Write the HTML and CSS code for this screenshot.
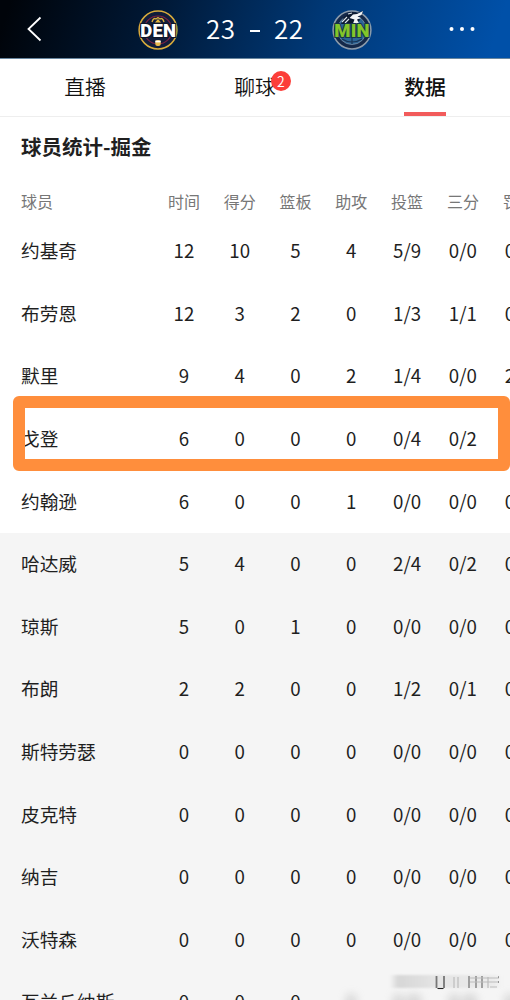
FILE: index.html
```
<!DOCTYPE html>
<html lang="zh-CN">
<head>
  <meta charset="UTF-8">
  <meta name="viewport" content="width=device-width, initial-scale=1.0">
  <title>球员统计</title>
  <link rel="stylesheet" href="styles.css">
</head>
<body>
  <header class="header">
    <svg class="back" viewBox="0 0 16 26"><path d="M14.5 1.5 2.5 13l12 11.5" /></svg>

    <div class="score">
      <svg class="logo" viewBox="0 0 40 40">
        <circle cx="20" cy="20" r="18.9" fill="#101d3b" stroke="#d9ac3c" stroke-width="1.5" />
        <circle cx="20" cy="20" r="14" fill="none" stroke="#7d2340" stroke-width="1.2" />
        <path d="M14 12c1-3.5 2.500-4 4-3l2-1.500 2 1.500c1.500-1 3-.5 4 3" fill="none" stroke="#d9ac3c" stroke-width="1.4" />
        <path d="m17 12.500 3-3.500 3 3.500z" fill="#e5b63c" />
        <rect x="17.3" y="30" width="5.4" height="6" rx="2" fill="#e8b94b" />
        <path d="M17.3 31.5h5.4" stroke="#fff" stroke-width="1.8" />
        <text class="logo-text den" x="20.3" y="27">DEN</text>
      </svg>
      <span class="points">23</span>
      <span class="dash">-</span>
      <span class="points">22</span>
      <svg class="logo" viewBox="0 0 40 40">
        <circle cx="20" cy="20" r="18.9" fill="#14294a" stroke="#8c9bab" stroke-width="1.5" />
        <circle cx="20" cy="20" r="14.5" fill="#2b6596" stroke="#8497ac" stroke-width=".7" />
        <path d="M20 26v8M10 29c6 4 14 4 20 0" fill="none" stroke="#183354" stroke-width="1.2" />
        <path d="m9 14 3-7 7-5 6 1 6-2-1 4-4 2 2 3-4 4z" fill="#0b1930" />
        <path d="m21 4.5 4-.5 6-3-1.5 4-4 1.5 3.5 1.500-4 1.500 2 4h-6l1.500-4-5-1.500z" fill="#f3f6f8" />
        <path d="m10 12 5-5m-2 6 4-4m-1-5 4-1" fill="none" stroke="#dce4eb" stroke-width="1.1" />
        <text class="logo-text min" x="20" y="27">MIN</text>
      </svg>
    </div>

    <svg class="more" viewBox="0 0 26 6">
      <circle cx="2.5" cy="3" r="2" /><circle cx="13" cy="3" r="2" /><circle cx="23.5" cy="3" r="2" />
    </svg>
  </header>

  <nav class="tabs">
    <a class="tab">直播</a>
    <a class="tab"><span class="tab-label">聊球<i class="badge">2</i></span></a>
    <a class="tab active">数据</a>
  </nav>

  <main>
    <h1>球员统计-掘金</h1>

    <table class="stats">
      <thead>
        <tr><th class="name">球员</th><th>时间</th><th>得分</th><th>篮板</th><th>助攻</th><th>投篮</th><th>三分</th><th>罚球</th></tr>
      </thead>
      <tbody class="starters">
        <tr><td>约基奇</td><td>12</td><td>10</td><td>5</td><td>4</td><td>5/9</td><td>0/0</td><td>0/0</td></tr>
        <tr><td>布劳恩</td><td>12</td><td>3</td><td>2</td><td>0</td><td>1/3</td><td>1/1</td><td>0/0</td></tr>
        <tr><td>默里</td><td>9</td><td>4</td><td>0</td><td>2</td><td>1/4</td><td>0/0</td><td>2/2</td></tr>
        <tr class="marked"><td>戈登<div class="marker"></div></td><td>6</td><td>0</td><td>0</td><td>0</td><td>0/4</td><td>0/2</td><td>0/0</td></tr>
        <tr><td>约翰逊</td><td>6</td><td>0</td><td>0</td><td>1</td><td>0/0</td><td>0/0</td><td>0/0</td></tr>
      </tbody>
      <tbody class="bench">
        <tr><td>哈达威</td><td>5</td><td>4</td><td>0</td><td>0</td><td>2/4</td><td>0/2</td><td>0/0</td></tr>
        <tr><td>琼斯</td><td>5</td><td>0</td><td>1</td><td>0</td><td>0/0</td><td>0/0</td><td>0/0</td></tr>
        <tr><td>布朗</td><td>2</td><td>2</td><td>0</td><td>0</td><td>1/2</td><td>0/1</td><td>0/0</td></tr>
        <tr><td>斯特劳瑟</td><td>0</td><td>0</td><td>0</td><td>0</td><td>0/0</td><td>0/0</td><td>0/0</td></tr>
        <tr><td>皮克特</td><td>0</td><td>0</td><td>0</td><td>0</td><td>0/0</td><td>0/0</td><td>0/0</td></tr>
        <tr><td>纳吉</td><td>0</td><td>0</td><td>0</td><td>0</td><td>0/0</td><td>0/0</td><td>0/0</td></tr>
        <tr><td>沃特森</td><td>0</td><td>0</td><td>0</td><td>0</td><td>0/0</td><td>0/0</td><td>0/0</td></tr>
        <tr class="faded"><td>瓦兰丘纳斯</td><td>0</td><td>0</td><td>0</td><td>0</td><td>0/0</td><td>0/0</td><td>0/0</td></tr>
      </tbody>
    </table>
  </main>

  <svg class="smudge" viewBox="0 0 118 26">
    <defs>
      <linearGradient id="fade"><stop offset="0" stop-color="#d5d5d5" /><stop offset=".4" stop-color="#e4e4e4" /><stop offset="1" stop-color="#ececec" /></linearGradient>
      <filter id="soft" x="-10%" y="-30%" width="120%" height="160%"><feGaussianBlur stdDeviation="3 1" /></filter>
      <filter id="thin" x="-10%" y="-30%" width="120%" height="160%"><feGaussianBlur stdDeviation=".7 .4" /></filter>
    </defs>
    <rect x="6" y="2" width="104" height="13" fill="url(#fade)" filter="url(#soft)" />
    <g filter="url(#thin)" fill="none" stroke="#bbb">
      <path d="M48.5 3v12M56 3v12" stroke="#777" stroke-width="1.8" />
      <path d="M66 4v11M70 4v11M100 4v11" stroke-width="1.2" />
      <path d="M81 3v12M88 3v12M94 3v12" stroke="#888" stroke-width="1.5" />
      <path d="M82 5h29M82 9h29M102 14h7" />
    </g>
    <path d="M49.5 15.5h6" stroke="#222" stroke-width="1.1" />
    <path d="M110 4h1M110 9h1" stroke="#555" />
  </svg>
</body>
</html>
```

FILE: styles.css
```
* {
  box-sizing: border-box;
}

body {
  position: relative;
  height: 1000px;
  margin: 0;
  overflow: hidden;
  background-color: #fff;
  color: #1f1f1f;
  font-family: 'Noto Sans CJK SC', sans-serif;
}

.header {
  display: flex;
  align-items: center;
  height: 59px;
  padding: 0 35px 0 26px;
  border-bottom: 1px solid #68869f;
  background: linear-gradient(108deg, #00040a 2%, #001835 30%, #003876 62%, #0050a8 96%);
}

.back {
  width: 16px;
  height: 26px;
  fill: none;
  stroke: #fff;
  stroke-width: 1.8;
}

.score {
  display: flex;
  align-items: center;
  margin: 1px 0 0 96px;
  color: #fff;
  font-size: 26px;
  font-weight: 350;
  letter-spacing: .4px;
}

.logo {
  width: 40px;
  height: 40px;
  flex: none;
  overflow: visible;
}

.logo-text {
  font: 900 18.5px 'Roboto', sans-serif;
  letter-spacing: .2px;
  text-anchor: middle;
  paint-order: stroke;
  stroke-width: 2px;
}

.den {
  fill: #fff;
  stroke: #0d1528;
}

.min {
  fill: #83c52a;
  stroke: #173448;
}

.points {
  width: 30px;
  margin: -3px 28px 0;
  line-height: 54px;
}

.dash {
  width: 10px;
  height: 2px;
  margin: 3px -14px 0;
  overflow: hidden;
  background-color: #fff;
  color: transparent;
}

.more {
  width: 26px;
  height: 6px;
  margin-left: auto;
  fill: #fff;
}

.tabs {
  display: grid;
  grid-template-columns: repeat(3, 1fr);
  height: 58px;
  border-bottom: 1px solid #eee;
}

.tab {
  display: flex;
  flex-direction: column;
  align-items: center;
  color: #111;
  font-size: 20.8px;
  font-weight: 350;
  line-height: 54px;
}

.tab.active {
  font-weight: 500;
}

.active::after {
  content: '';
  width: 42px;
  height: 4px;
  margin-top: -1px;
  background-color: #f25b5b;
}

.tab-label {
  position: relative;
}

.badge {
  position: absolute;
  top: 12px;
  right: -15px;
  width: 20px;
  height: 20px;
  border-radius: 50%;
  background-color: #fc3e39;
  color: #fff;
  font-size: 14px;
  font-style: normal;
  line-height: 20px;
  text-align: center;
}

h1 {
  height: 61px;
  margin: 0;
  padding-left: 21px;
  font-size: 20.5px;
  font-weight: 700;
  line-height: 59px;
}

.stats {
  width: 546.6px;
  table-layout: fixed;
  border-collapse: collapse;
  font-size: 18.7px;
  text-align: center;
}

tr {
  height: 62.6px;
}

thead tr {
  height: 42px;
}

th {
  padding: 3px 0 0;
  color: #777;
  font-size: 16px;
  font-weight: 400;
  line-height: 24px;
  vertical-align: middle;
}

td {
  padding: 0 0 2px;
  line-height: 28px;
}

.name {
  width: 156px;
}

.name,
td:first-child {
  padding-left: 21px;
  text-align: left;
}

.bench {
  background-color: #f5f5f5;
}

.marked td:first-child {
  position: relative;
}

/* hand-drawn box round the row */
.marker {
  position: absolute;
  top: -12px;
  left: 13px;
  width: 497px;
  height: 75px;
  border: 12px solid #ff8e3c;
  border-radius: 6px;
}

.marked td:last-child {
  visibility: hidden;
}

.faded td:nth-child(n + 5) {
  color: #999;
  filter: blur(4px);
}

.smudge {
  position: absolute;
  top: 973px;
  left: 388px;
  width: 118px;
  height: 26px;
}
```
